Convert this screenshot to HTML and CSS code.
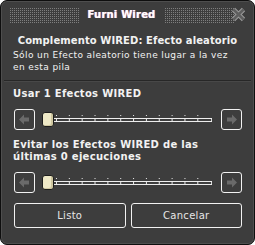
FILE: index.html
```html
<!DOCTYPE html>
<html lang="es">
<head>
  <meta charset="UTF-8">
  <title>Furni Wired</title>
  <link rel="stylesheet" href="styles.css">
</head>
<body>
  <div class="window">
    <div class="header">
      <div class="dots"></div>
      <span class="title">Furni Wired</span>
      <div class="dots"></div>
      <svg class="close" width="15" height="15" viewBox="0 0 15 15">
        <path d="M2.5 2.5 L12.5 12.5 M12.5 2.5 L2.5 12.5" stroke="#9a9a9a" stroke-width="4.6"/>
        <path d="M2.5 2.5 L12.5 12.5 M12.5 2.5 L2.5 12.5" stroke="#5f5f5f" stroke-width="2.6"/>
      </svg>
    </div>

    <div class="section">
      <div class="heading">Complemento WIRED: Efecto aleatorio</div>
      <p class="text">Sólo un Efecto aleatorio tiene lugar a la vez en esta pila</p>
    </div>

    <div class="divider"></div>

    <div class="section">
      <div class="label first">Usar 1 Efectos WIRED</div>
      <div class="slider">
        <div class="arrow">
          <svg width="19" height="19" viewBox="0 0 19 19"><polygon points="4,9.5 9,4.5 9,7.5 14,7.5 14,11.5 9,11.5 9,14.5" fill="#6a6a6a"/></svg>
        </div>
        <div class="knob"></div>
        <svg class="track" width="160" height="21" viewBox="0 0 160 21">
          <g fill="#f2f2f2">
            <rect x="2" y="6" width="1" height="1"/><rect x="15" y="6" width="1" height="1"/><rect x="28" y="6" width="1" height="1"/><rect x="41" y="6" width="1" height="1"/><rect x="54" y="6" width="1" height="1"/><rect x="67" y="6" width="1" height="1"/><rect x="80" y="6" width="1" height="1"/><rect x="93" y="6" width="1" height="1"/><rect x="106" y="6" width="1" height="1"/><rect x="119" y="6" width="1" height="1"/><rect x="132" y="6" width="1" height="1"/><rect x="145" y="6" width="1" height="1"/>
            <rect x="0" y="9" width="160" height="1"/>
            <rect x="0" y="12" width="160" height="1"/>
            <rect x="2" y="10" width="1" height="2"/><rect x="15" y="10" width="1" height="2"/><rect x="28" y="10" width="1" height="2"/><rect x="41" y="10" width="1" height="2"/><rect x="54" y="10" width="1" height="2"/><rect x="67" y="10" width="1" height="2"/><rect x="80" y="10" width="1" height="2"/><rect x="93" y="10" width="1" height="2"/><rect x="106" y="10" width="1" height="2"/><rect x="119" y="10" width="1" height="2"/><rect x="132" y="10" width="1" height="2"/><rect x="145" y="10" width="1" height="2"/><rect x="159" y="10" width="1" height="2"/>
          </g>
        </svg>
        <div class="arrow right">
          <svg width="19" height="19" viewBox="0 0 19 19"><polygon points="15,9.5 10,4.5 10,7.5 5,7.5 5,11.5 10,11.5 10,14.5" fill="#6a6a6a"/></svg>
        </div>
      </div>

      <div class="label">Evitar los Efectos WIRED de las últimas 0 ejecuciones</div>
      <div class="slider">
        <div class="arrow">
          <svg width="19" height="19" viewBox="0 0 19 19"><polygon points="4,9.5 9,4.5 9,7.5 14,7.5 14,11.5 9,11.5 9,14.5" fill="#6a6a6a"/></svg>
        </div>
        <div class="knob"></div>
        <svg class="track" width="160" height="21" viewBox="0 0 160 21">
          <g fill="#f2f2f2">
            <rect x="2" y="6" width="1" height="1"/><rect x="15" y="6" width="1" height="1"/><rect x="28" y="6" width="1" height="1"/><rect x="41" y="6" width="1" height="1"/><rect x="54" y="6" width="1" height="1"/><rect x="67" y="6" width="1" height="1"/><rect x="80" y="6" width="1" height="1"/><rect x="93" y="6" width="1" height="1"/><rect x="106" y="6" width="1" height="1"/><rect x="119" y="6" width="1" height="1"/><rect x="132" y="6" width="1" height="1"/><rect x="145" y="6" width="1" height="1"/>
            <rect x="0" y="9" width="160" height="1"/>
            <rect x="0" y="12" width="160" height="1"/>
            <rect x="2" y="10" width="1" height="2"/><rect x="15" y="10" width="1" height="2"/><rect x="28" y="10" width="1" height="2"/><rect x="41" y="10" width="1" height="2"/><rect x="54" y="10" width="1" height="2"/><rect x="67" y="10" width="1" height="2"/><rect x="80" y="10" width="1" height="2"/><rect x="93" y="10" width="1" height="2"/><rect x="106" y="10" width="1" height="2"/><rect x="119" y="10" width="1" height="2"/><rect x="132" y="10" width="1" height="2"/><rect x="145" y="10" width="1" height="2"/><rect x="159" y="10" width="1" height="2"/>
          </g>
        </svg>
        <div class="arrow right">
          <svg width="19" height="19" viewBox="0 0 19 19"><polygon points="15,9.5 10,4.5 10,7.5 5,7.5 5,11.5 10,11.5 10,14.5" fill="#6a6a6a"/></svg>
        </div>
      </div>

      <div class="buttons">
        <button class="button">Listo</button>
        <button class="button">Cancelar</button>
      </div>
    </div>
  </div>
</body>
</html>
```

FILE: styles.css
```css
body {
  margin: 0;
  background-color: #fff;
  font-family: "DejaVu Sans", "Liberation Sans", sans-serif;
}
.window {
  width: 255px;
  height: 245px;
  box-sizing: border-box;
  background-color: #3d3d3d;
  border: 1px solid #0e0e0e;
  border-radius: 7px;
  box-shadow: inset 0 0 0 1px #4e4e4e;
  color: #f2f2f2;
  overflow: hidden;
}
.header {
  display: flex;
  align-items: center;
  height: 26px;
  padding: 0 8px;
  box-sizing: border-box;
}
.dots {
  flex: 1;
  height: 16px;
  margin-top: 1px;
  background-image:
    linear-gradient(90deg, #3d3d3d 1px, transparent 1px),
    linear-gradient(#3d3d3d 1px, #7e7e7e 1px);
  background-size: 2px 2px;
}
.title {
  margin: 0 9px;
  font-size: 10px;
  font-weight: bold;
  letter-spacing: 0.2px;
  color: #fff;
  text-shadow: -0.5px 0 #d88, 0.5px 0 #88d;
}
.close {
  margin-left: -3px;
}
.section {
  padding: 0 12px;
}
.heading {
  margin-top: 8px;
  font-size: 10px;
  font-weight: bold;
  letter-spacing: 0.1px;
  line-height: 12px;
  text-align: center;
}
.text {
  margin: 2px 0 0;
  font-size: 9px;
  letter-spacing: 0.4px;
  line-height: 12px;
}
.divider {
  margin: 7px 3px 0;
  border-top: 1px solid #272727;
  border-bottom: 1px solid #484848;
}
.label {
  margin-top: 9px;
  font-size: 10px;
  font-weight: bold;
  letter-spacing: 0.3px;
  line-height: 12px;
}
.label.first {
  margin-top: 6px;
}
.slider {
  display: flex;
  align-items: flex-start;
  margin-top: 9px;
  padding-left: 1px;
}
.arrow {
  width: 19px;
  height: 19px;
  border: 1px solid #f2f2f2;
  border-radius: 3px;
}
.arrow.right {
  margin-left: 9px;
}
.knob {
  width: 10px;
  height: 13px;
  margin: 3px 0 0 7px;
  background-color: #eee8c6;
  border: 1px solid #1c1c1c;
  border-radius: 3px;
  box-shadow: inset -2px -1px 0 #cfc7a0;
}
.buttons {
  display: flex;
  gap: 5px;
  margin-top: 10px;
  padding-left: 1px;
}
.button {
  flex: 1;
  height: 25px;
  background-color: #3d3d3d;
  border: 1px solid #f2f2f2;
  border-radius: 3px;
  color: #e6e6e6;
  font-family: "DejaVu Sans", "Liberation Sans", sans-serif;
  font-size: 10px;
  letter-spacing: 0.3px;
}
```
